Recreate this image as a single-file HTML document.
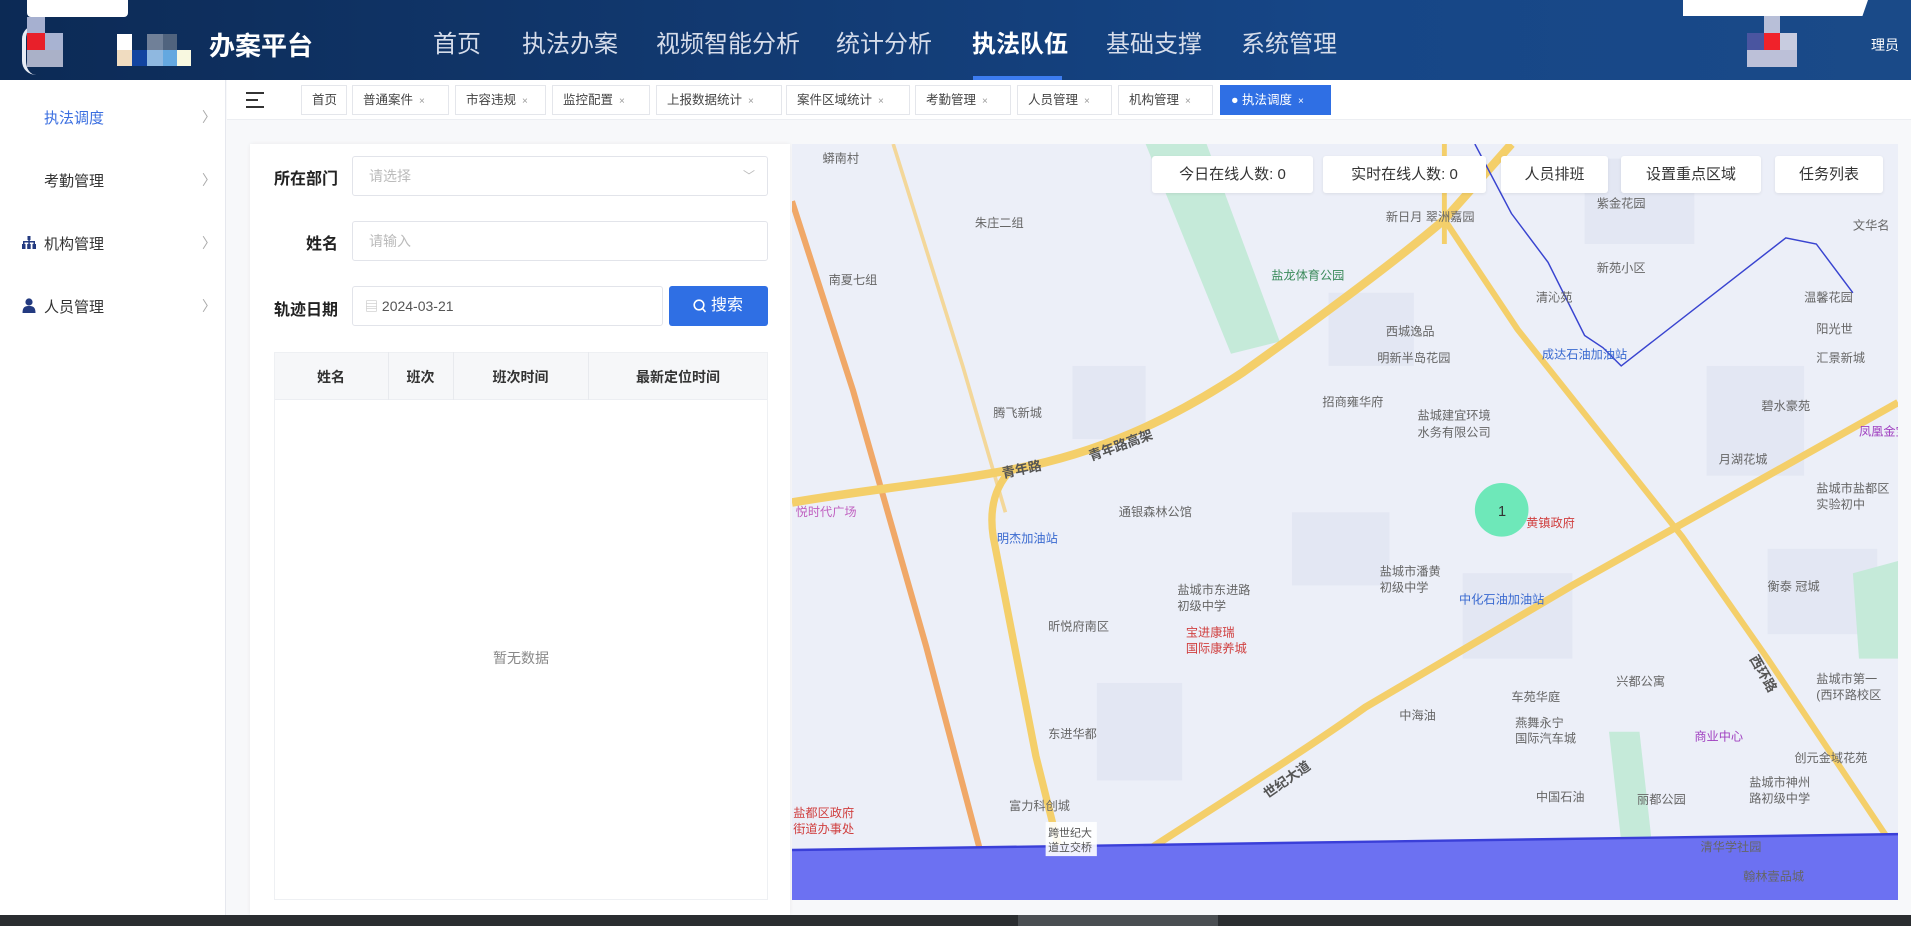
<!DOCTYPE html>
<html><head><meta charset="utf-8"><style>
*{margin:0;padding:0;box-sizing:border-box}
body{width:1911px;height:926px;overflow:hidden;background:#f7f8fa;font-family:"Liberation Sans","Noto Sans CJK SC",sans-serif;position:relative;color:#333}
.abs{position:absolute}
#hdr{left:0;top:0;width:1911px;height:80px;background:linear-gradient(90deg,#0c2a55 0%,#123a72 40%,#164687 70%,#1a4a88 100%)}
.nav{top:24px;font-size:24px;color:#d5dcea;white-space:nowrap}
#side{left:0;top:80px;width:226px;height:835px;background:#fff;border-right:1px solid #e6e8ee}
.si{left:0;width:226px;font-size:15px;color:#333}
.chev{position:absolute;left:202px;top:0;color:#aaa;font-size:14px}
.tab{top:85px;height:30px;border:1px solid #e4e6eb;background:#fff;font-size:12.5px;color:#444;line-height:28px;padding-left:10px;white-space:nowrap}
.tab i{font-style:normal;color:#999;font-size:10px;margin-left:6px}
.lbl{font-size:16px;font-weight:bold;color:#222;text-align:right;width:90px;left:248px}
.inp{left:352px;height:40px;border:1px solid #e2e4ea;border-radius:3px;background:#fff;font-size:14px;color:#bbb;line-height:38px;padding-left:16px}
.mbtn{top:156px;height:37px;background:#fff;border-radius:3px;font-size:15px;color:#333;text-align:center;line-height:37px;box-shadow:0 1px 3px rgba(0,0,0,.08)}
</style></head><body>
<div id="hdr" class="abs"></div>
<div class="abs" style="left:27px;top:0;width:101px;height:17px;background:#fff;border-radius:0 0 4px 4px"></div>
<div class="abs" style="left:22px;top:25px;width:14px;height:50px;border-left:4px solid #e8ecf5;border-radius:20px 0 0 20px"></div>
<div class="abs" style="left:27px;top:17px;width:18px;height:16px;background:#a6b0d0"></div>
<div class="abs" style="left:27px;top:33px;width:18px;height:17px;background:#e8202a"></div>
<div class="abs" style="left:45px;top:33px;width:18px;height:17px;background:#a8b3d2"></div>
<div class="abs" style="left:27px;top:50px;width:36px;height:17px;background:#aab1c8"></div>
<div class="abs" style="left:117px;top:34px;width:15px;height:16px;background:#fff"></div>
<div class="abs" style="left:117px;top:50px;width:15px;height:16px;background:#f0dcc0"></div>
<div class="abs" style="left:132px;top:50px;width:15px;height:16px;background:#1244a0"></div>
<div class="abs" style="left:147px;top:34px;width:16px;height:16px;background:#708098"></div>
<div class="abs" style="left:147px;top:50px;width:16px;height:16px;background:#8fb8e0"></div>
<div class="abs" style="left:163px;top:34px;width:14px;height:16px;background:#50637e"></div>
<div class="abs" style="left:163px;top:50px;width:14px;height:16px;background:#64a8e0"></div>
<div class="abs" style="left:177px;top:50px;width:14px;height:16px;background:#f8f8e0"></div>
<div class="abs" style="left:209px;top:26px;font-size:26px;font-weight:bold;color:#fff">办案平台</div>
<div class="abs nav" style="left:433px">首页</div>
<div class="abs nav" style="left:522px">执法办案</div>
<div class="abs nav" style="left:656px">视频智能分析</div>
<div class="abs nav" style="left:836px">统计分析</div>
<div class="abs nav" style="left:972px;color:#fff;font-weight:bold">执法队伍</div>
<div class="abs" style="left:973px;top:76px;width:89px;height:4px;background:#3c7cf0"></div>
<div class="abs nav" style="left:1106px">基础支撑</div>
<div class="abs nav" style="left:1241px">系统管理</div>
<div class="abs" style="left:1683px;top:0;width:185px;height:16px;background:#fff;clip-path:polygon(0 0,100% 0,97% 100%,0 100%)"></div>
<div class="abs" style="left:1764px;top:16px;width:16px;height:17px;background:#b8bfd8"></div>
<div class="abs" style="left:1747px;top:33px;width:17px;height:17px;background:#4a55a0"></div>
<div class="abs" style="left:1764px;top:33px;width:16px;height:17px;background:#f0222a"></div>
<div class="abs" style="left:1780px;top:33px;width:17px;height:17px;background:#c8cce0"></div>
<div class="abs" style="left:1747px;top:50px;width:50px;height:17px;background:#bcc0d8"></div>
<div class="abs" style="left:1871px;top:35px;font-size:14px;color:#fff">理员</div>

<div id="side" class="abs"></div>
<div class="abs si" style="top:107px"><span style="position:absolute;left:44px;color:#3b6fe0">执法调度</span><span class="chev">〉</span></div>
<div class="abs si" style="top:170px"><span style="position:absolute;left:44px">考勤管理</span><span class="chev">〉</span></div>
<div class="abs si" style="top:233px"><svg style="position:absolute;left:22px;top:3px" width="14" height="13" viewBox="0 0 14 13"><rect x="5.5" y="0" width="3" height="4" fill="#233a80"/><rect x="1" y="5" width="12" height="1.5" fill="#233a80"/><rect x="1" y="6" width="1.5" height="2" fill="#233a80"/><rect x="6.3" y="4" width="1.5" height="4" fill="#233a80"/><rect x="11.5" y="6" width="1.5" height="2" fill="#233a80"/><rect x="0" y="8" width="3.5" height="5" fill="#233a80"/><rect x="5.2" y="8" width="3.5" height="5" fill="#233a80"/><rect x="10.5" y="8" width="3.5" height="5" fill="#233a80"/></svg><span style="position:absolute;left:44px">机构管理</span><span class="chev">〉</span></div>
<div class="abs si" style="top:296px"><svg style="position:absolute;left:22px;top:2px" width="14" height="15" viewBox="0 0 14 15"><circle cx="7" cy="4" r="3.6" fill="#233a80"/><path d="M0.5 15 C0.5 9 3 8 7 8 C11 8 13.5 9 13.5 15Z" fill="#233a80"/></svg><span style="position:absolute;left:44px">人员管理</span><span class="chev">〉</span></div>

<div class="abs" style="left:227px;top:80px;width:1684px;height:40px;background:#fff;border-bottom:1px solid #eceef2"></div>
<div class="abs" style="left:246px;top:92px;width:18px;height:2px;background:#333"></div>
<div class="abs" style="left:246px;top:99px;width:12px;height:2px;background:#333"></div>
<div class="abs" style="left:246px;top:106px;width:18px;height:2px;background:#333"></div>
<div class="abs tab" style="left:301px;width:46px">首页</div>
<div class="abs tab" style="left:352px;width:97px">普通案件<i>×</i></div>
<div class="abs tab" style="left:455px;width:91px">市容违规<i>×</i></div>
<div class="abs tab" style="left:552px;width:98px">监控配置<i>×</i></div>
<div class="abs tab" style="left:656px;width:126px">上报数据统计<i>×</i></div>
<div class="abs tab" style="left:786px;width:124px">案件区域统计<i>×</i></div>
<div class="abs tab" style="left:915px;width:96px">考勤管理<i>×</i></div>
<div class="abs tab" style="left:1017px;width:95px">人员管理<i>×</i></div>
<div class="abs tab" style="left:1118px;width:95px">机构管理<i>×</i></div>
<div class="abs tab" style="left:1220px;width:111px;background:#2f6fe4;border-color:#2f6fe4;color:#fff">● 执法调度<i style="color:#fff">×</i></div>

<div class="abs" style="left:250px;top:144px;width:540px;height:771px;background:#fff;box-shadow:0 0 4px rgba(0,0,0,.06)"></div>
<div class="abs lbl" style="top:165px">所在部门</div>
<div class="abs inp" style="top:156px;width:416px">请选择<span style="position:absolute;right:12px;top:0;color:#bbb;font-size:12px">﹀</span></div>
<div class="abs lbl" style="top:230px">姓名</div>
<div class="abs inp" style="top:221px;width:416px">请输入</div>
<div class="abs lbl" style="top:296px">轨迹日期</div>
<div class="abs inp" style="top:286px;width:311px;color:#555;padding-left:12px"><span style="color:#bbb;font-size:13px">▤</span> 2024-03-21</div>
<div class="abs" style="left:669px;top:286px;width:99px;height:40px;background:#2f6fe4;border-radius:3px;color:#fff;font-size:16px;line-height:40px;padding-left:24px"><svg style="position:absolute;left:24px;top:13px" width="14" height="15" viewBox="0 0 14 15"><circle cx="6" cy="6" r="4.8" fill="none" stroke="#fff" stroke-width="1.6"/><line x1="9.5" y1="9.5" x2="12.5" y2="13" stroke="#fff" stroke-width="1.6"/></svg><span style="margin-left:18px">搜索</span></div>
<div class="abs" style="left:274px;top:352px;width:494px;height:48px;background:#f6f7f9;border-bottom:1px solid #eceef2"></div>
<div class="abs" style="left:274px;top:352px;width:494px;height:548px;border:1px solid #eef0f3"></div>
<div class="abs" style="left:388px;top:352px;width:1px;height:48px;background:#e8eaee"></div>
<div class="abs" style="left:453px;top:352px;width:1px;height:48px;background:#e8eaee"></div>
<div class="abs" style="left:588px;top:352px;width:1px;height:48px;background:#e8eaee"></div>
<div class="abs" style="left:274px;top:367px;width:114px;text-align:center;font-size:14px;font-weight:bold">姓名</div>
<div class="abs" style="left:388px;top:367px;width:65px;text-align:center;font-size:14px;font-weight:bold">班次</div>
<div class="abs" style="left:453px;top:367px;width:135px;text-align:center;font-size:14px;font-weight:bold">班次时间</div>
<div class="abs" style="left:588px;top:367px;width:180px;text-align:center;font-size:14px;font-weight:bold">最新定位时间</div>
<div class="abs" style="left:274px;top:648px;width:494px;text-align:center;font-size:14px;color:#888">暂无数据</div>

<svg class="abs" style="left:792px;top:144px" width="1106" height="756" viewBox="650 118 907 620" preserveAspectRatio="none" font-family="Liberation Sans,Noto Sans CJK SC,sans-serif">
<rect x="650" y="118" width="907" height="620" fill="#eceff8"/>
<g fill="#e3e7f3"><rect x="880" y="300" width="60" height="60"/><rect x="1090" y="240" width="70" height="60"/><rect x="1200" y="470" width="90" height="70"/><rect x="1400" y="300" width="80" height="90"/><rect x="900" y="560" width="70" height="80"/><rect x="1060" y="420" width="80" height="60"/><rect x="1300" y="130" width="90" height="70"/><rect x="1450" y="450" width="90" height="70"/></g>
<polygon points="940,118 990,118 1050,280 1010,290" fill="#c5ead9"/>
<polygon points="1320,600 1345,600 1355,690 1330,690" fill="#c5ead9"/>
<polygon points="1520,470 1557,460 1557,540 1525,540" fill="#c5ead9"/>
<polyline points="650,165 700,320 760,530 815,738" fill="none" stroke="#f0a868" stroke-width="5"/>
<polyline points="733,118 790,300 825,420" fill="none" stroke="#f3d79a" stroke-width="3"/>
<path d="M650,412 C720,400 780,395 830,385 C900,372 960,345 1020,305 C1090,255 1150,210 1185,180 L1240,118" fill="none" stroke="#f4cf6a" stroke-width="7"/>
<path d="M830,385 C815,400 812,420 815,440 L850,620 L870,700 L878,738" fill="none" stroke="#f4cf6a" stroke-width="6"/>
<path d="M1185,180 L1245,270 L1380,440 L1450,540 L1557,700" fill="none" stroke="#f4cf6a" stroke-width="5"/>
<path d="M880,738 C950,690 1050,630 1120,580 L1290,480 L1557,330" fill="none" stroke="#f4cf6a" stroke-width="6"/>
<path d="M1185,118 L1185,200" fill="none" stroke="#f4cf6a" stroke-width="4"/>
<polyline points="1210,118 1240,175 1270,215 1300,275 1315,285 1330,300 1465,195 1490,200 1520,240" fill="none" stroke="#3944d0" stroke-width="1.2"/>
<polygon points="650,697 1557,684 1557,738 650,738" fill="#6c71f2"/>
<line x1="650" y1="697" x2="1557" y2="684" stroke="#3a3fd8" stroke-width="2"/>
<circle cx="1232" cy="418" r="22" fill="#6ee8b9"/>
<text x="1229" y="423" font-size="12" fill="#333">1</text>
<g font-size="10" fill="#666">
<text x="675" y="133">蟒南村</text><text x="800" y="186">朱庄二组</text><text x="680" y="233">南夏七组</text>
<text x="1137" y="181">新日月 翠洲嘉园</text><text x="1043" y="229" fill="#3a8a5a">盐龙体育公园</text>
<text x="1137" y="275">西城逸品</text><text x="1130" y="297">明新半岛花园</text><text x="1265" y="294" fill="#3a6ad0">成达石油加油站</text>
<text x="1085" y="333">招商雍华府</text><text x="1163" y="344">盐城建宜环境</text><text x="1163" y="358">水务有限公司</text>
<text x="815" y="342">腾飞新城</text><text x="918" y="423">通银森林公馆</text><text x="818" y="445" fill="#3a6ad0">明杰加油站</text>
<text x="653" y="423" fill="#c060c0">悦时代广场</text><text x="1252" y="432" fill="#d04040">黄镇政府</text>
<text x="1132" y="472">盐城市潘黄</text><text x="1132" y="485">初级中学</text><text x="966" y="487">盐城市东进路</text><text x="966" y="500">初级中学</text>
<text x="860" y="517">昕悦府南区</text><text x="973" y="522" fill="#d04040">宝进康瑞</text><text x="973" y="535" fill="#d04040">国际康养城</text>
<text x="1197" y="495" fill="#3a6ad0">中化石油加油站</text><text x="1240" y="575">车苑华庭</text><text x="1243" y="596">燕舞永宁</text><text x="1243" y="609">国际汽车城</text>
<text x="1326" y="562">兴都公寓</text><text x="1390" y="607" fill="#a040c0">商业中心</text><text x="1472" y="625">创元金域花苑</text>
<text x="1260" y="657">中国石油</text><text x="1343" y="659">丽都公园</text><text x="1435" y="645">盐城市神州</text><text x="1435" y="658">路初级中学</text>
<text x="1148" y="590">中海油</text><text x="860" y="605">东进华都</text><text x="828" y="664">富力科创城</text>
<text x="651" y="670" fill="#d04040">盐都区政府</text><text x="651" y="683" fill="#d04040">街道办事处</text>
<text x="1310" y="223">新苑小区</text><text x="1260" y="247">清沁苑</text><text x="1310" y="170">紫金花园</text><text x="1480" y="247">温馨花园</text>
<text x="1490" y="273">阳光世</text><text x="1490" y="297">汇景新城</text><text x="1445" y="336">碧水豪苑</text><text x="1410" y="380">月湖花城</text>
<text x="1525" y="357" fill="#a040c0">凤凰金宝广</text><text x="1490" y="404">盐城市盐都区</text><text x="1490" y="417">实验初中</text>
<text x="1450" y="484">衡泰 冠城</text><text x="1490" y="560">盐城市第一</text><text x="1490" y="573">(西环路校区</text>
<text x="1520" y="188">文华名</text><text x="1395" y="698">清华学社园</text><text x="1430" y="722">翰林壹品城</text>
</g>
<rect x="858" y="674" width="42" height="28" fill="#fff" opacity=".9"/>
<text x="860" y="686" font-size="9" fill="#555">跨世纪大</text><text x="860" y="698" font-size="9" fill="#555">道立交桥</text>
<g font-size="11" fill="#555" font-weight="bold"><text x="823" y="392" transform="rotate(-12 823 392)">青年路</text><text x="895" y="378" transform="rotate(-20 895 378)">青年路高架</text><text x="1040" y="655" transform="rotate(-35 1040 655)">世纪大道</text><text x="1435" y="540" transform="rotate(60 1435 540)">西环路</text></g>
</svg>
<div class="abs mbtn" style="left:1152px;width:161px">今日在线人数: 0</div>
<div class="abs mbtn" style="left:1323px;width:163px">实时在线人数: 0</div>
<div class="abs mbtn" style="left:1501px;width:107px">人员排班</div>
<div class="abs mbtn" style="left:1621px;width:140px">设置重点区域</div>
<div class="abs mbtn" style="left:1775px;width:108px">任务列表</div>

<div class="abs" style="left:0;top:915px;width:1911px;height:11px;background:#2a2d30"></div>
<div class="abs" style="left:1018px;top:915px;width:200px;height:11px;background:#4a4e52"></div>
</body></html>
